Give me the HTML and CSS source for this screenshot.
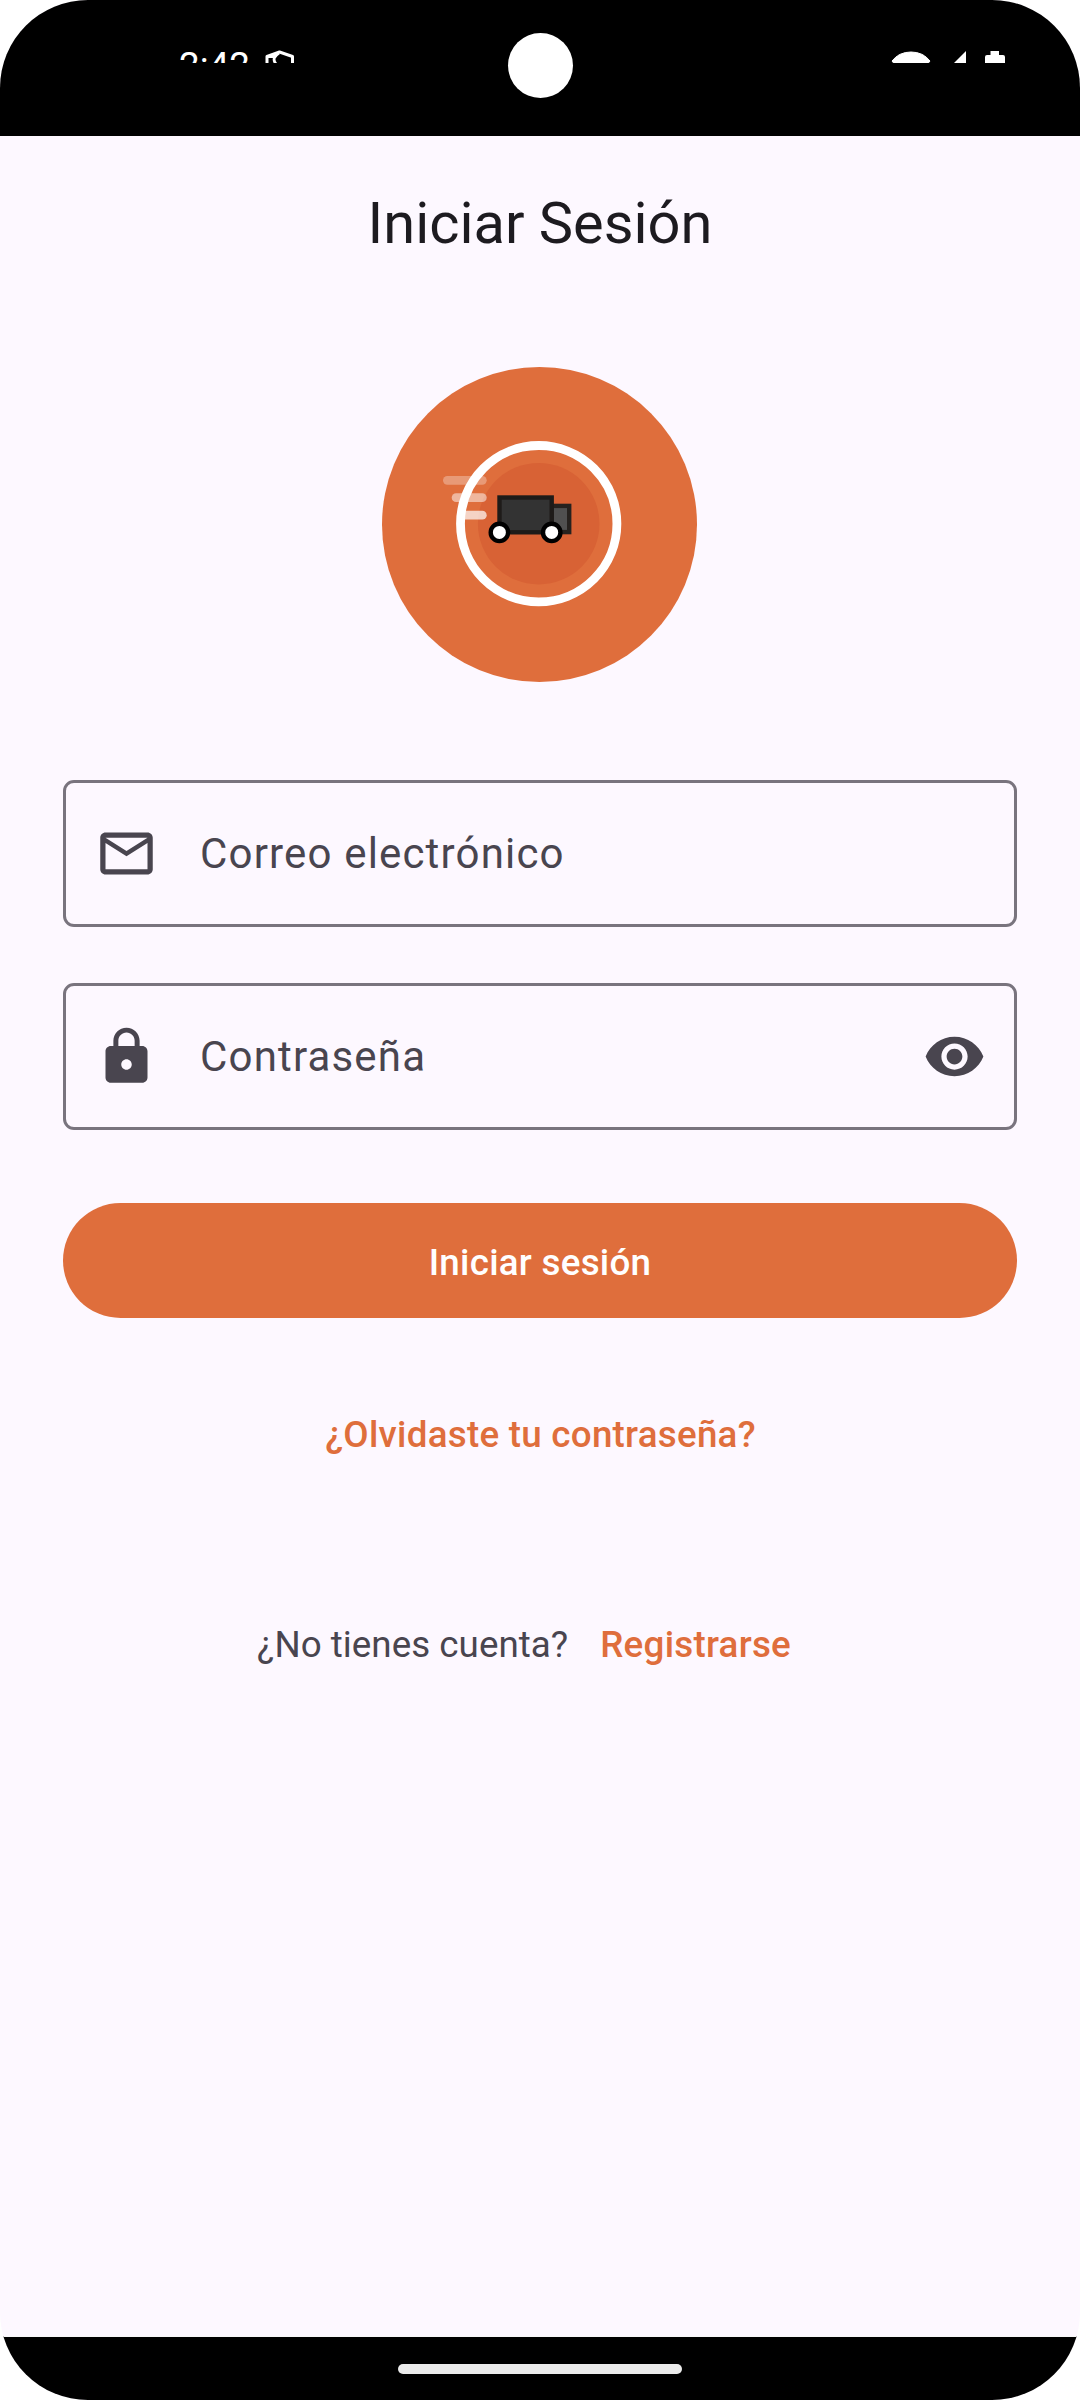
FILE: index.html
```html
<!DOCTYPE html>
<html lang="es">
<head>
<meta charset="utf-8">
<title>Iniciar Sesión</title>
<link rel="stylesheet" href="styles.css">
</head>
<body>
<div class="screen">
  <header class="status-bar">
    <div class="status-content">
      <span class="clock">2:42</span>
      <svg class="shield" viewBox="0 0 30 34" width="30" height="34">
        <path d="M2 26V6.500L14.500 2L27.500 6.500V26" fill="none" stroke="#fff" stroke-width="3" stroke-linejoin="round"/>
        <path d="M3 6.500H10M14 3Q6 8 11 14" fill="none" stroke="#fff" stroke-width="2.800"/>
      </svg>
      <div class="indicators">
        <svg class="wifi" viewBox="0 0 40 34" width="40" height="34"><path d="M1 10Q8 1 20 1T39 10L20 33Z" fill="#fff" stroke="#fff" stroke-linejoin="round"/></svg>
        <svg class="signal" viewBox="0 0 34 34" width="34" height="34"><path d="M34 0V34H0Z" fill="#fff"/></svg>
        <svg class="battery" viewBox="0 0 20 34" width="20" height="34"><path d="M5.500 0H14V4H18Q20 4 20 6V34H0V6Q0 4 2 4H5.500Z" fill="#fff"/></svg>
      </div>
    </div>
    <div class="camera"></div>
  </header>
  <main class="content">
    <h1 class="title">Iniciar Sesión</h1>
    <svg class="logo" viewBox="0 0 315 315" width="315" height="315">
      <circle cx="157.500" cy="157.500" r="157.500" fill="#df6e3c"/>
      <circle cx="156.700" cy="156.700" r="60.800" fill="#d86235"/>
      <circle cx="156.700" cy="156.700" r="78.200" fill="none" stroke="#fff" stroke-width="8.800"/>
      <g stroke="#fff" stroke-width="8.800" stroke-linecap="round">
        <path d="M65.400 113.300H100.300" opacity=".3"/>
        <path d="M74.100 130.700H100.300" opacity=".5"/>
        <path d="M82.800 148.200H100.300" opacity=".7"/>
      </g>
      <g stroke-width="4.400">
        <rect x="169.600" y="138.900" width="17.600" height="26.200" fill="#505050" stroke="#26221f"/>
        <rect x="117.500" y="130.500" width="52.200" height="34.800" fill="#333" stroke="#1e1b19"/>
        <g fill="#fff" stroke="#000"><circle cx="117.400" cy="165.400" r="8.700"/><circle cx="169.700" cy="165.400" r="8.700"/></g>
      </g>
    </svg>
    <form class="form">
      <label class="field">
        <svg class="icon" viewBox="0 0 24 24"><path d="M22 6c0-1.100-.9-2-2-2H4c-1.100 0-2 .9-2 2v12c0 1.100.9 2 2 2h16c1.100 0 2-.9 2-2V6zm-2 0l-8 5-8-5h16zm0 12H4V8l8 5 8-5v10z"/></svg>
        <span class="field-label">Correo electrónico</span>
      </label>
      <label class="field">
        <svg class="icon" viewBox="0 0 24 24"><path d="M18 8h-1V6c0-2.760-2.240-5-5-5S7 3.240 7 6v2H6c-1.100 0-2 .9-2 2v10c0 1.100.9 2 2 2h12c1.100 0 2-.9 2-2V10c0-1.100-.9-2-2-2zm-6 9c-1.100 0-2-.9-2-2s.9-2 2-2 2 .9 2 2-.9 2-2 2zm3.100-9H8.900V6c0-1.710 1.390-3.100 3.100-3.100s3.100 1.390 3.100 3.100v2z"/></svg>
        <span class="field-label">Contraseña</span>
        <svg class="icon" viewBox="0 0 24 24"><path d="M12 4.500C7 4.500 2.730 7.610 1 12c1.730 4.390 6 7.500 11 7.500s9.270-3.110 11-7.500c-1.730-4.390-6-7.500-11-7.500zM12 17c-2.760 0-5-2.240-5-5s2.240-5 5-5 5 2.240 5 5-2.240 5-5 5zm0-8c-1.660 0-3 1.340-3 3s1.340 3 3 3 3-1.340 3-3-1.340-3-3-3z"/></svg>
      </label>
      <button class="submit" type="button">Iniciar sesión</button>
    </form>
    <a class="link forgot">¿Olvidaste tu contraseña?</a>
    <div class="signup"><span class="question">¿No tienes cuenta?</span><a class="link">Registrarse</a></div>
  </main>
  <footer class="nav-bar"><div class="handle"></div></footer>
</div>
</body>
</html>
```

FILE: styles.css
```css
* { box-sizing: border-box; }
body { margin: 0; background: #fff; font-family: Roboto, sans-serif; }
.screen {
  width: 1080px; height: 2400px;
  display: flex; flex-direction: column;
  background: #fdf8ff; border-radius: 88px; overflow: hidden;
}
.status-bar { position: relative; height: 136px; background: #000; }
.status-content {
  height: 63px; padding: 50px 75px 0 179px; overflow: hidden;
  display: flex; align-items: flex-start; color: #fff;
}
.clock { width: 86px; font-size: 36.75px; line-height: 36px; margin-top: -2px; }
.indicators { display: flex; margin: 1px 0 0 auto; }
.signal { margin-left: 1px; }
.battery { margin-left: 19px; }
.camera {
  position: absolute; left: 508px; top: 33px;
  width: 65px; height: 65px; border-radius: 50%; background: #fff;
}
.content { flex: 1; display: flex; flex-direction: column; align-items: center; }
.title {
  margin: 0; height: 168px; line-height: 175px;
  font-size: 57.75px; font-weight: 400; color: #1d1b20;
}
.logo { margin-top: 63px; margin-right: 1px; flex: none; }
.form { width: 954px; margin-top: 98px; display: flex; flex-direction: column; gap: 56px; }
.field {
  height: 147px; padding: 0 28px 0 29px;
  display: flex; align-items: center;
  border: 3px solid #79747e; border-radius: 11px;
}
.icon { width: 63px; height: 63px; flex: none; fill: #49454f; }
.field-label { flex: 1; margin-left: 42px; font-size: 42px; letter-spacing: 1.17px; color: #49454f; }
.submit {
  height: 115px; margin-top: 17px; padding: 4px 0 0; border: 0; border-radius: 58px;
  background: #df6e3c; color: #fff;
  font: 500 36.75px Roboto, sans-serif; letter-spacing: .2625px;
}
.link { font-size: 36.75px; font-weight: 500; line-height: 52px; letter-spacing: .2625px; color: #df6e3c; }
.forgot { margin: 91px 0 0 1px; }
.signup { display: flex; align-self: flex-start; margin: 158px 0 0 257px; gap: 32px; }
.question { font-size: 36.75px; line-height: 52px; letter-spacing: .03px; color: #49454f; }
.nav-bar {
  height: 64px; padding-top: 27px; background: #000; border-top: 1px solid #f9f9f9;
}
.handle { width: 284px; height: 10px; margin: 0 auto; border-radius: 5px; background: #ebebeb; }
```
